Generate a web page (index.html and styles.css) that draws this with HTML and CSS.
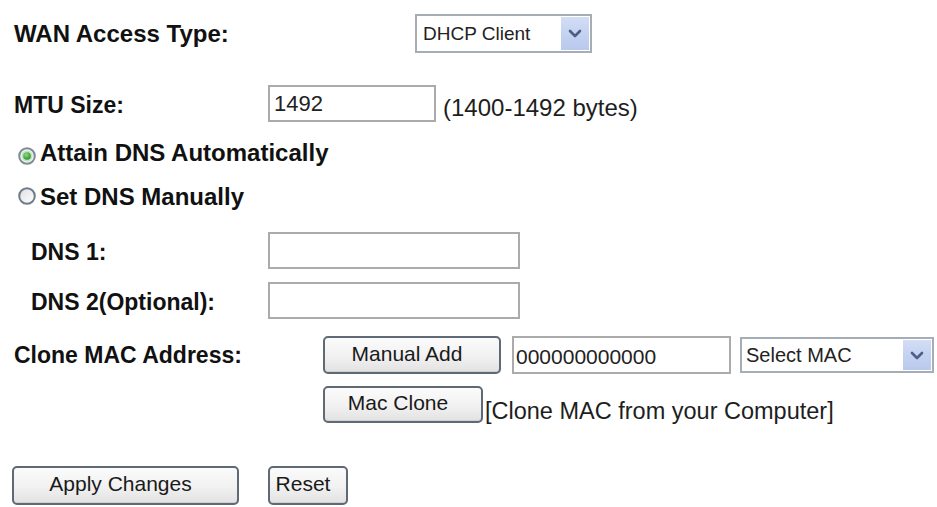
FILE: index.html
```html
<!DOCTYPE html>
<html>
<head>
<meta charset="utf-8">
<link rel="stylesheet" href="styles.css">
</head>
<body>
<div class="page">
  <div class="row row-wan">
    <span class="label label-wan">WAN Access Type:</span>
    <div class="select select-wan">
      <span class="select-text">DHCP Client</span>
      <span class="select-arrow"><svg width="14" height="9" viewBox="0 0 14 9"><path d="M2 2 L7 7 L12 2" fill="none" stroke="#4c5f86" stroke-width="2.6" stroke-linecap="round" stroke-linejoin="round"/></svg></span>
    </div>
  </div>

  <div class="row row-mtu">
    <span class="label label-col">MTU Size:</span>
    <input class="field field-mtu" type="text" value="1492">
    <span class="note note-mtu">(1400-1492 bytes)</span>
  </div>

  <div class="row row-radio row-radio1">
    <svg class="radio radio-on" width="18" height="18" viewBox="0 0 18 18">
      <defs>
        <radialGradient id="rg1" cx="40%" cy="35%" r="70%"><stop offset="0" stop-color="#8fdc88"/><stop offset="1" stop-color="#268a28"/></radialGradient>
      </defs>
      <circle cx="9" cy="9" r="7.8" fill="#f3f5f3" stroke="#7d8b97" stroke-width="2"/>
      <circle cx="9" cy="9" r="5.6" fill="#bfe8b6"/>
      <circle cx="9" cy="9" r="3.8" fill="url(#rg1)"/>
    </svg>
    <span class="label label-radio">Attain DNS Automatically</span>
  </div>

  <div class="row row-radio row-radio2">
    <svg class="radio radio-off" width="18" height="18" viewBox="0 0 18 18">
      <defs>
        <linearGradient id="lg1" x1="0" y1="0" x2="1" y2="1"><stop offset="0" stop-color="#dcdfe2"/><stop offset="1" stop-color="#ffffff"/></linearGradient>
      </defs>
      <circle cx="9" cy="9" r="7.8" fill="url(#lg1)" stroke="#6f7d89" stroke-width="2"/>
    </svg>
    <span class="label label-radio">Set DNS Manually</span>
  </div>

  <div class="row row-dns1">
    <span class="label label-col label-indent">DNS 1:</span>
    <input class="field field-dns" type="text" value="">
  </div>

  <div class="row row-dns2">
    <span class="label label-col label-indent">DNS 2(Optional):</span>
    <input class="field field-dns" type="text" value="">
  </div>

  <div class="row row-clone">
    <span class="label label-clone">Clone MAC Address:</span>
    <button class="btn btn-manual" type="button">Manual Add</button>
    <input class="field field-mac" type="text" value="000000000000">
    <div class="select select-mac">
      <span class="select-text">Select MAC</span>
      <span class="select-arrow"><svg width="14" height="9" viewBox="0 0 14 9"><path d="M2 2 L7 7 L12 2" fill="none" stroke="#4c5f86" stroke-width="2.6" stroke-linecap="round" stroke-linejoin="round"/></svg></span>
    </div>
  </div>

  <div class="row row-macclone">
    <button class="btn btn-macclone" type="button">Mac Clone</button>
    <span class="note note-clone">[Clone MAC from your Computer]</span>
  </div>

  <div class="row row-actions">
    <button class="btn btn-apply" type="button">Apply Changes</button>
    <button class="btn btn-reset" type="button">Reset</button>
  </div>
</div>
</body>
</html>
```

FILE: styles.css
```css
html, body {
  margin: 0;
  padding: 0;
  background: #ffffff;
}

.page {
  padding: 14px 0 0 14px;
  font-family: "Liberation Sans", Arial, sans-serif;
  color: #151515;
}

.row {
  display: flex;
  align-items: center;
}

.label {
  font-weight: bold;
  font-size: 23px;
  color: #111111;
  white-space: nowrap;
}

.row-wan {
  height: 39px;
}

.label-wan {
  width: 401px;
  font-size: 24px;
}

.label-radio {
  font-size: 24px;
}

.label-col {
  width: 254px;
  margin-top: 3px;
  box-sizing: border-box;
}

.label-indent {
  padding-left: 17px;
}

.label-clone {
  width: 309px;
}

/* select */
.select {
  box-sizing: border-box;
  display: flex;
  align-items: stretch;
  border: 2px solid #a7adb5;
  background: #fff;
  padding: 1px;
}

.select-text {
  flex: 1;
  display: flex;
  align-items: center;
  font-size: 20px;
  color: #222;
  white-space: nowrap;
}

.select-arrow {
  width: 28px;
  display: flex;
  align-items: center;
  justify-content: center;
  background: linear-gradient(180deg, #d3ddf5 0%, #c2d0f0 60%, #b9c9ee 100%);
}

.select-wan {
  width: 177px;
  height: 39px;
}

.select-wan .select-text {
  padding-left: 5px;
  font-size: 19px;
}

.select-mac {
  width: 194px;
  height: 36px;
  margin-left: 9px;
}

.select-mac .select-text {
  padding-left: 3px;
}

/* text fields */
.field {
  box-sizing: border-box;
  border: 2px solid #ababab;
  background: #fff;
  font-family: "Liberation Sans", Arial, sans-serif;
  font-size: 21px;
  color: #222;
  outline: none;
  margin: 0;
}

.row-mtu {
  margin-top: 32px;
  height: 37px;
}

.field-mtu {
  width: 168px;
  height: 37px;
  padding: 0 0 0 4px;
  font-size: 22px;
}

.note {
  font-size: 23.5px;
  color: #1e1e1e;
  white-space: nowrap;
}

.note-mtu {
  margin-left: 7px;
  margin-top: 8px;
  font-size: 24px;
}

/* radios */
.row-radio {
  height: 30px;
}

.row-radio1 {
  margin-top: 16px;
}

.row-radio2 {
  margin-top: 14px;
}

.radio {
  flex: none;
  width: 18px;
  height: 18px;
  margin-left: 4px;
  margin-right: 4px;
}

.radio-on {
  margin-top: 6px;
}

.radio-off {
  margin-bottom: 3px;
}

/* dns */
.row-dns1 {
  margin-top: 20px;
  height: 37px;
}

.row-dns2 {
  margin-top: 13px;
  height: 37px;
}

.field-dns {
  width: 252px;
  height: 37px;
}

/* clone */
.row-clone {
  margin-top: 17px;
  height: 38px;
}

.field-mac {
  width: 219px;
  height: 38px;
  margin-left: 11px;
  padding: 4px 0 0 2px;
}

.btn {
  box-sizing: border-box;
  font-family: "Liberation Sans", Arial, sans-serif;
  font-size: 21px;
  color: #1a1a1a;
  border: 2px solid #5f6a76;
  border-radius: 5px;
  background: linear-gradient(180deg, #fbfbfb 0%, #f1f1f1 55%, #e2e2e2 100%);
  box-shadow: inset 0 -1px 0 #d0d0d0;
  padding: 0 10px 3px 0;
  margin: 0;
  white-space: nowrap;
}

.btn-manual {
  width: 178px;
  height: 38px;
}

.row-macclone {
  margin-top: 12px;
  margin-left: 309px;
  height: 37px;
  align-items: flex-end;
}

.btn-macclone {
  width: 160px;
  height: 37px;
}

.note-clone {
  margin-left: 2px;
  margin-bottom: -2px;
}

/* actions */
.row-actions {
  margin-top: 43px;
  margin-left: -2px;
  height: 39px;
}

.btn-apply {
  width: 227px;
  height: 39px;
}

.btn-reset {
  width: 80px;
  height: 39px;
  margin-left: 29px;
}
```
